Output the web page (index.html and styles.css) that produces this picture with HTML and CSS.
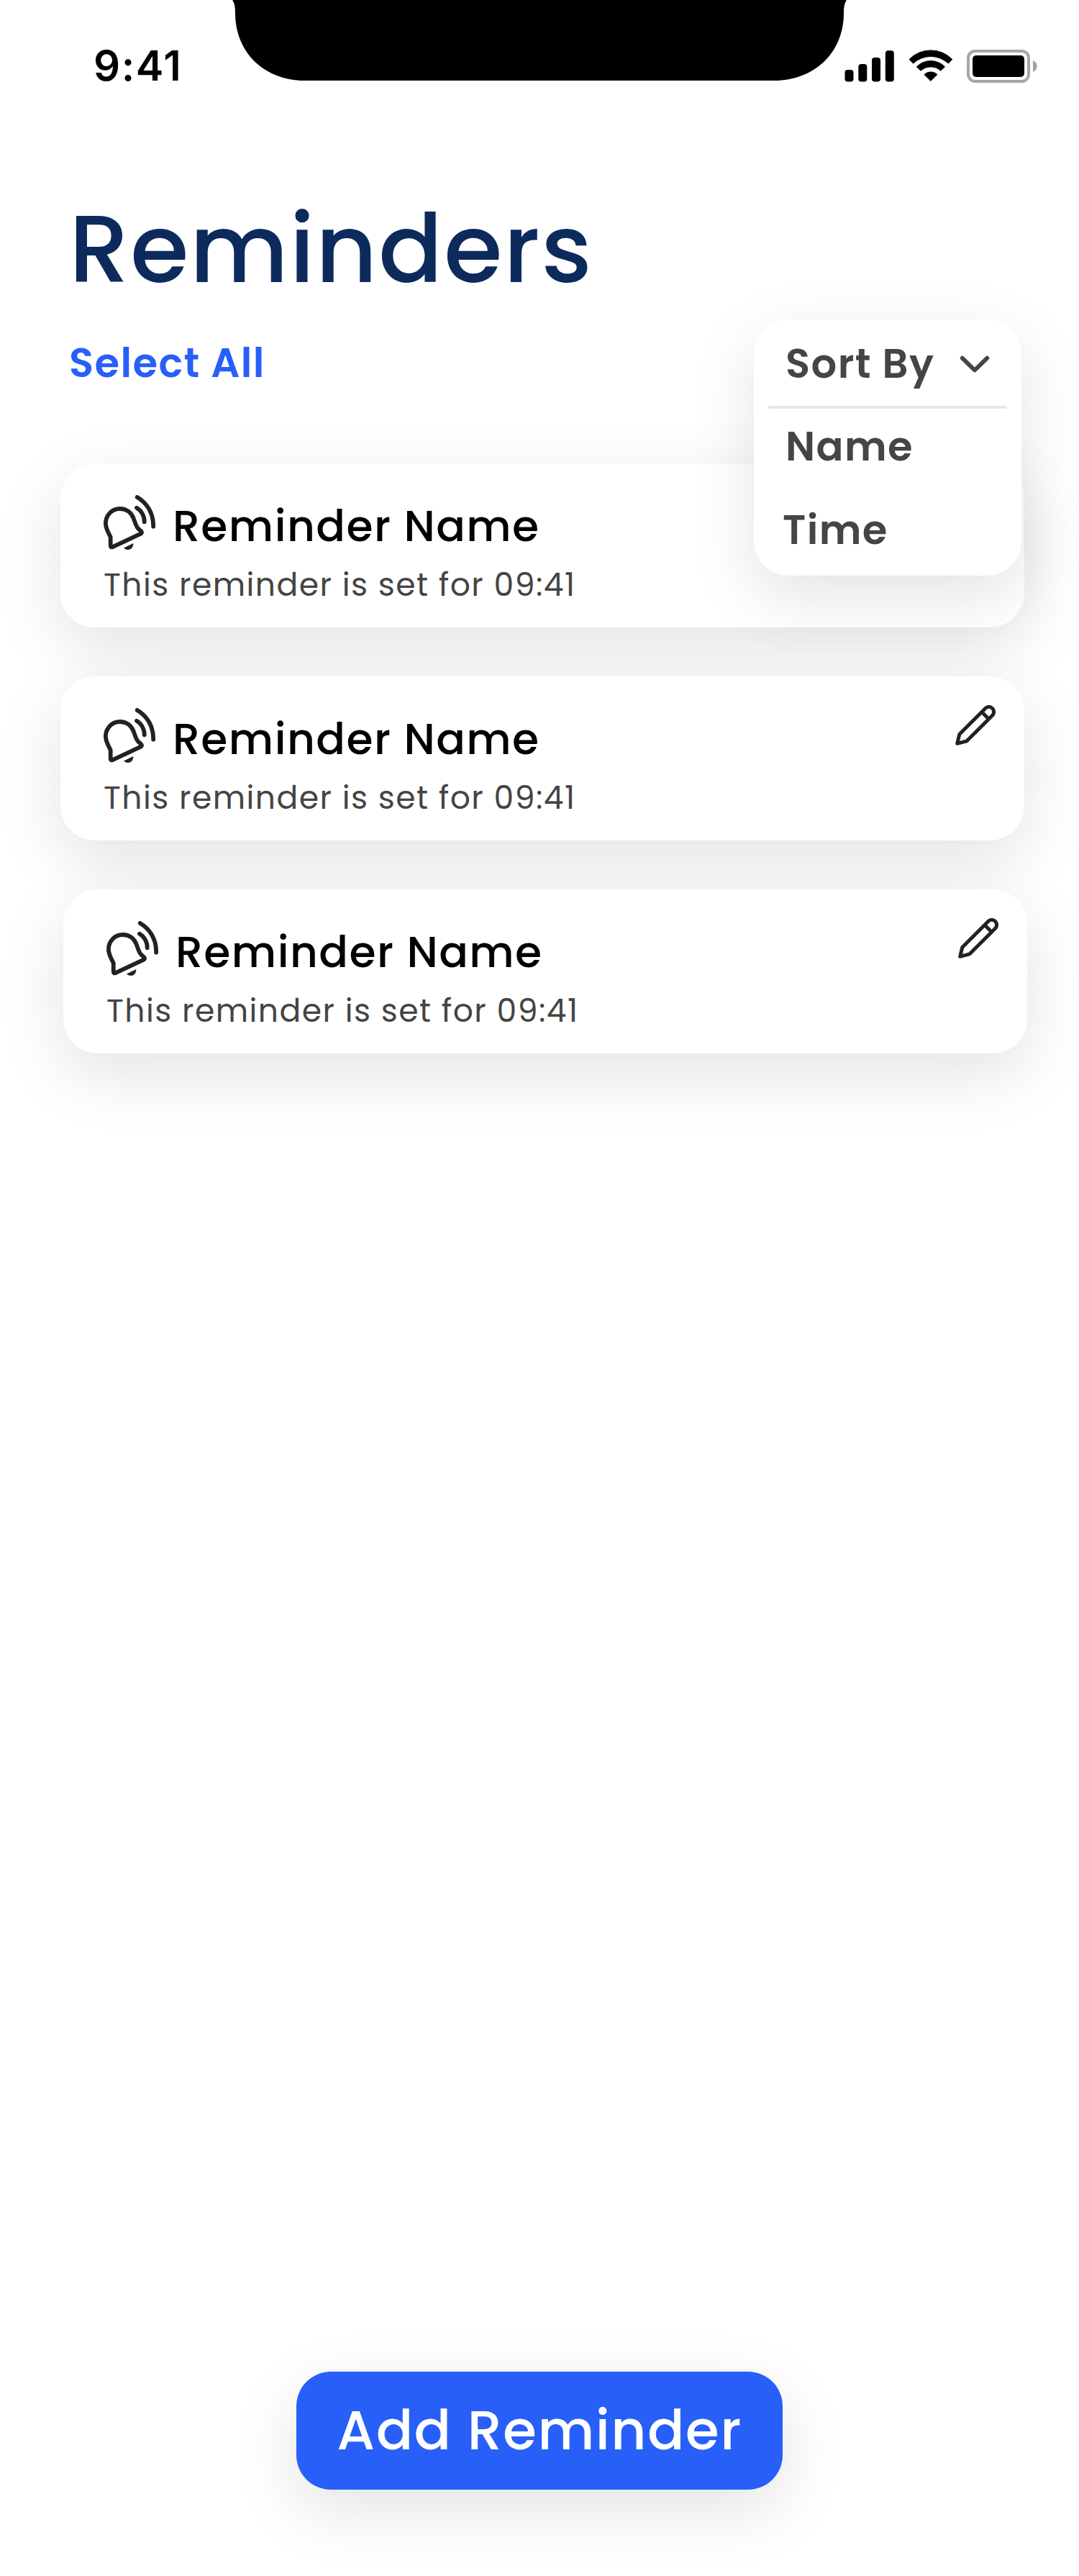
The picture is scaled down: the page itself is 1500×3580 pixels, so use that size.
FILE: index.html
```html
<!DOCTYPE html>
<html lang="en">
<head>
<meta charset="utf-8">
<title>Reminders</title>
<link rel="stylesheet" href="styles.css">
</head>
<body>
<svg class="symbols" aria-hidden="true">
  <symbol id="bell" viewBox="0 0 72 76">
    <g fill="none" stroke="#222" stroke-width="5.8" stroke-linecap="round" stroke-linejoin="round">
      <path d="M9.7 58.5C7.5 53.5 2.9 47 2.9 39.5C2.9 28 11.5 19 22.7 19C32 19 38.5 24.5 41.5 32C43.5 37 45 43.5 48 46.5L52.3 50.4Q54 52.2 51.9 53.6L12.6 72.2Q9.7 73.2 9.7 70Z"/>
      <path d="M46 17.7C52 21 57 29 56.7 37.3"/>
      <path d="M46.7 2.9C59 10 69.5 24 69.1 43.7"/>
    </g>
    <path fill="#222" d="M28 73.6L41.3 67C41.5 72 38.5 76 34 76C31.5 76 29.5 75.3 28 73.6Z"/>
  </symbol>
  <symbol id="pencil" viewBox="0 0 56 56">
    <path fill="none" stroke="#222" stroke-width="5" stroke-linejoin="round" d="M2.7 53.3L5.8 40.4L41.8 4.4A6.9 6.9 0 0 1 51.6 14.2L16 49.8ZM36.8 9.4L46.6 19.2"/>
  </symbol>
</svg>

<main class="screen">
  <header class="status">
    <time class="clock">9:41</time>
    <svg class="notch" width="854" height="112" viewBox="323 0 854 112"><path d="M323 0C326 4 327 10 327 18C327 75 370 112 423 112H1077C1130 112 1173 75 1173 18C1173 10 1174 4 1177 0Z"/></svg>
    <div class="indicators">
      <svg width="70" height="48" viewBox="1174 68 70 48"><rect x="1174.5" y="97" width="12" height="16.5" rx="4"/><rect x="1193.3" y="89" width="12" height="24.5" rx="4"/><rect x="1212" y="80" width="12" height="33.5" rx="4"/><rect x="1230.8" y="70.3" width="12" height="43.2" rx="4"/></svg>
      <svg width="61" height="48" viewBox="1263.5 68 61 48"><g stroke="#000" stroke-width="1" stroke-linejoin="round"><path d="M1263.5 82A41.8 41.8 0 0 1 1323.3 82L1317.8 87.6A35.8 35.8 0 0 0 1269 87.6Z" transform="translate(0 .5)"/><path d="M1273.8 92.7A27.8 27.8 0 0 1 1313 92.7L1307.4 98.3A20.8 20.8 0 0 0 1279.4 98.3Z"/><path d="M1284.4 103.6A12.8 12.8 0 0 1 1302.4 103.6L1293.4 112.4Z"/></g></svg>
      <svg width="98" height="48" viewBox="1344 68 98 48"><rect x="1346" y="71" width="84" height="42" rx="9.5" fill="none" stroke="#a6a6a6" stroke-width="4"/><rect x="1352" y="77" width="72" height="30" rx="5"/><path fill="#a0a0a0" d="M1436 84C1443.5 87 1443.5 97 1436 100Z"/></svg>
    </div>
  </header>

  <h1 class="title">Reminders</h1>

  <div class="toolbar">
    <a class="select-all">Select All</a>
    <div class="sort">
      <div class="sort-head">
        <span>Sort By</span>
        <svg width="42" height="24" viewBox="0 0 42 24"><path d="M3.7 3.7L21 20.5L38.3 3.7" fill="none" stroke="#454545" stroke-width="5.8" stroke-linecap="round" stroke-linejoin="round"/></svg>
      </div>
      <div class="divider"></div>
      <div class="option">Name</div>
      <div class="option option-time">Time</div>
    </div>
  </div>

  <section class="list">
    <article class="card">
      <svg class="bell"><use href="#bell"/></svg>
      <div class="name">Reminder Name</div>
      <svg class="pencil"><use href="#pencil"/></svg>
      <p class="detail">This reminder is set for 09:41</p>
    </article>
    <article class="card">
      <svg class="bell"><use href="#bell"/></svg>
      <div class="name">Reminder Name</div>
      <svg class="pencil"><use href="#pencil"/></svg>
      <p class="detail">This reminder is set for 09:41</p>
    </article>
    <article class="card card-last">
      <svg class="bell"><use href="#bell"/></svg>
      <div class="name">Reminder Name</div>
      <svg class="pencil"><use href="#pencil"/></svg>
      <p class="detail">This reminder is set for 09:41</p>
    </article>
  </section>

  <button class="add">Add Reminder</button>
</main>
</body>
</html>
```
FILE: styles.css
```css
* {
  box-sizing: border-box;
}

body {
  margin: 0;
  background: #fff;
  font-family: Poppins, Inter, sans-serif;
}

svg {
  display: block;
  flex: none;
}

.symbols {
  display: none;
}

.screen {
  display: flex;
  flex-direction: column;
  width: 1500px;
  height: 3580px;
  padding-bottom: 120px;
  overflow: hidden;
}

/* Status bar */
.status {
  display: flex;
  height: 246px;
  padding-left: 130px;
}

.clock {
  width: 193px;
  padding-top: 56px;
  font: 600 58px/70px Inter, sans-serif;
  letter-spacing: 1.6px;
}

.indicators {
  display: flex;
  gap: 19.5px;
  margin-left: -3px;
  padding-top: 68px;
}

/* Heading and toolbar */
.title {
  margin: 0 0 17px 96px;
  color: #0c2a5c;
  font-size: 132px;
  font-weight: 500;
  line-height: 200px;
  letter-spacing: 1.5px;
}

.toolbar {
  position: relative;
  height: 181px;
  padding-left: 96px;
  font-size: 56px;
  font-weight: 600;
  line-height: 84px;
  letter-spacing: 1.4px;
}

.select-all {
  color: #275ff8;
}

.sort {
  position: absolute;
  top: -19px;
  right: 80px;
  z-index: 1;
  width: 372px;
  height: 356px;
  padding: 20px 20px 10px;
  border-radius: 48px;
  background: #fff;
  box-shadow: 0 28px 92px rgba(0, 0, 0, .112);
  color: #454545;
}

.sort-head {
  display: flex;
  justify-content: space-between;
  align-items: center;
  padding: 0 24px;
}

.divider {
  height: 4px;
  margin: 16px 0 1px;
  border-radius: 2px;
  background: #e6e6e6;
}

.option {
  padding-left: 24px;
  line-height: 104px;
}

.option-time {
  margin-top: 12px;
  padding-left: 20px;
}

/* Reminder cards */
.list {
  display: flex;
  flex-direction: column;
  gap: 68px;
  padding-left: 84px;
}

.card {
  display: grid;
  grid-template-columns: 96px 1fr 56px;
  grid-template-rows: 86px 68px;
  row-gap: 5px;
  width: 1340px;
  height: 228px;
  padding: 44px 40px 25px 60px;
  border-radius: 48px;
  background: #fff;
  box-shadow: 0 28px 92px rgba(0, 0, 0, .112);
}

.card-last {
  margin-left: 4px;
}

.bell {
  width: 72px;
  height: 76px;
}

.name {
  color: #000;
  font-size: 60px;
  font-weight: 500;
  line-height: 86px;
  letter-spacing: 1.45px;
}

.pencil {
  width: 56px;
  height: 56px;
  margin-top: -4px;
}

.detail {
  grid-column: 1 / -1;
  margin: 0;
  color: #444;
  font-size: 44px;
  line-height: 68px;
  letter-spacing: 1.5px;
}

/* Primary action */
.add {
  align-self: center;
  width: 676px;
  height: 164px;
  margin-top: auto;
  padding: 0;
  border: 0;
  border-radius: 48px;
  background: #275ff8;
  box-shadow: 0 28px 92px rgba(0, 0, 0, .112);
  color: #fff;
  font: 500 76px/164px Poppins, Inter, sans-serif;
  letter-spacing: 1.4px;
}
```
